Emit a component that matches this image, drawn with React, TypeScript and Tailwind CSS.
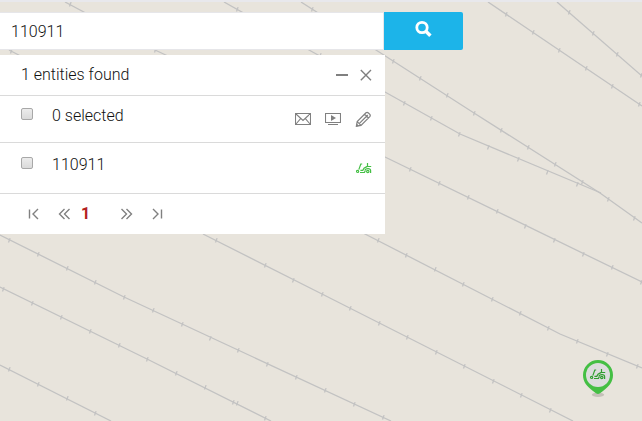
import type { ReactNode } from "react"

interface IconButtonProps {
  label: string
  children: ReactNode
}

type Point = [number, number]

interface Track {
  line: string
  ticks: Point[]
}

const tracks: Track[] = [
  {
    line: "488,2 559,50 642,106",
    ticks: [[506, 14], [533, 32], [559, 50], [586, 68], [612, 86], [639, 104]],
  },
  {
    line: "557,2 642,76",
    ticks: [[569, 12], [593, 33], [617, 54], [641, 75]],
  },
  {
    line: "301,2 376,50 474,113 600,193 642,223",
    ticks: [[312, 9], [393, 61], [420, 78], [447, 95], [474, 113], [501, 130], [528, 147], [555, 164], [582, 182], [608, 199], [634, 218]],
  },
  {
    line: "224,2 309,50 385,92 460,134 601,193",
    ticks: [[237, 9], [320, 55], [404, 103], [431, 118], [459, 134], [488, 147], [518, 159], [547, 172], [577, 184]],
  },
  {
    line: "65,2 155,50 385,157 642,282",
    ticks: [[70, 4], [155, 50], [410, 169], [439, 183], [468, 197], [497, 211], [525, 226], [554, 240], [583, 254], [612, 267], [641, 282]],
  },
  {
    line: "9,50 365,234 560,334 642,368",
    ticks: [[11, 51], [378, 240], [406, 255], [435, 269], [463, 284], [492, 299], [520, 313], [548, 328], [577, 341], [607, 354], [637, 366]],
  },
  {
    line: "203,234 322,294 573,421",
    ticks: [[216, 240], [265, 265], [293, 280], [322, 294], [350, 308], [379, 323], [407, 337], [436, 352], [464, 366], [493, 381], [521, 395], [550, 410]],
  },
  {
    line: "0,235 124,297 238,350 391,421",
    ticks: [[9, 240], [38, 254], [67, 268], [95, 282], [124, 297], [153, 310], [182, 324], [210, 338], [238, 350], [267, 364], [296, 377], [325, 390], [354, 404], [383, 417]],
  },
  {
    line: "0,287 147,359 271,421",
    ticks: [[3, 289], [32, 303], [61, 317], [90, 331], [119, 345], [147, 359], [176, 373], [205, 387], [233, 402], [237, 403], [265, 418]],
  },
  {
    line: "0,365 111,421",
    ticks: [[9, 369], [38, 384], [67, 398], [95, 413]],
  },
]

function MapBackground() {
  return (
    <svg
      className="absolute inset-0 h-full w-full"
      viewBox="0 0 642 421"
      preserveAspectRatio="xMinYMin slice"
      fill="none"
      stroke="#c2c2c2"
      aria-hidden="true"
    >
      {tracks.map((track) => (
        <g key={track.line}>
          <polyline points={track.line} strokeWidth="1.3" />
          {track.ticks.map(([x, y]) => (
            <path key={`${x}-${y}`} d={`M${x - 0.5} ${y + 2.5}l1.6 -4.4`} strokeWidth="1.3" />
          ))}
        </g>
      ))}
    </svg>
  )
}

function MowerShape() {
  return (
    <g fill="none" stroke="currentColor" strokeWidth="1.2">
      <path d="M6.2 1H4.8L2.8 6.6" />
      <circle cx="1.6" cy="8.4" r="1.1" />
      <path d="M4 9.5H8.4L9.4 7.4M4.4 7.3H6.8L8 5.2L11.3 3.4M11.5 0V3.5H15.2" />
      <path d="M8.8 7.2Q9.6 5.7 12 5.7Q14.6 5.7 14.6 7.6V10" />
      <circle cx="11.8" cy="8.5" r="1.2" />
    </g>
  )
}

function MapPin() {
  return (
    <svg className="absolute top-[360px] left-[583px]" width="30" height="38" viewBox="0 0 30 38" role="img" aria-label="110911">
      <ellipse cx="15" cy="34.8" rx="6.2" ry="2.2" fill="#c5c0b9" />
      <path d="M15 0A15 15 0 0 1 30 15C30 22 26 26.5 20 31Q16.5 34 15 34Q13.5 34 10 31C4 26.5 0 22 0 15A15 15 0 0 1 15 0Z" fill="#44bf44" />
      <circle cx="15" cy="15" r="12" fill="#dcdddd" />
      <g transform="translate(7 9)" className="text-[#2f9e2f]">
        <MowerShape />
      </g>
    </svg>
  )
}

function IconButton({ label, children }: IconButtonProps) {
  return (
    <button type="button" aria-label={label} className="flex h-4 w-4 cursor-pointer items-center justify-center text-[#808080]">
      <svg width="16" height="16" viewBox="0 0 16 16" fill="none" stroke="currentColor" strokeWidth="1.4">
        {children}
      </svg>
    </button>
  )
}

function Checkbox({ id }: { id: string }) {
  return (
    <input
      id={id}
      type="checkbox"
      className="mt-3 h-3 w-3 shrink-0 appearance-none rounded-xs border border-[#a8a8a8] bg-linear-to-b from-[#ececec] to-[#dadada] checked:bg-none checked:bg-[#1cb4e9]"
    />
  )
}

function SearchBar() {
  return (
    <form className="flex items-center" onSubmit={(e) => e.preventDefault()}>
      <input
        type="text"
        aria-label="Search entities"
        defaultValue="110911"
        className="h-[38px] w-full max-w-[384px] min-w-0 border border-l-0 border-[#e6e6e9] bg-white pl-[11px] text-base font-light outline-none"
      />
      <button type="submit" aria-label="Search" className="flex h-[38px] w-[79px] shrink-0 cursor-pointer justify-center rounded-r-xs bg-[#1cb4e9] pt-2 text-white">
        <svg width="18" height="18" viewBox="0 0 18 18" fill="none" stroke="currentColor" strokeWidth="2.8">
          <circle cx="7" cy="7.5" r="5.2" />
          <path d="M10.6 11L15.4 15.8" strokeWidth="3.4" />
        </svg>
      </button>
    </form>
  )
}

function Pager() {
  return (
    <nav aria-label="Pages" className="flex h-10 items-center pl-[26px]">
      <IconButton label="First page">
        <path d="M3.5 3.5V12.5M12 3L7 8L12 13" />
      </IconButton>
      <div className="ml-[14px] flex">
        <IconButton label="Previous page">
          <path d="M8.5 3L3.5 8L8.5 13M13.5 3L8.5 8L13.5 13" />
        </IconButton>
      </div>
      <a href="#page-1" aria-current="page" className="ml-[9px] w-[38px] text-base leading-5 font-bold text-[#b32020]">1</a>
      <IconButton label="Next page">
        <path d="M2.5 3L7.5 8L2.5 13M7.5 3L12.5 8L7.5 13" />
      </IconButton>
      <div className="ml-[14px] flex">
        <IconButton label="Last page">
          <path d="M4 3L9 8L4 13M12.5 3.5V12.5" />
        </IconButton>
      </div>
    </nav>
  )
}

function ResultsPanel() {
  return (
    <section className="mt-[5px] w-full max-w-[385px] divide-y divide-[#dadada] bg-white">
      <header className="flex h-[41px] items-center pr-3 pl-[21px]">
        <h1 className="grow text-base font-light">1 entities found</h1>
        <div className="flex gap-2">
          <IconButton label="Minimize">
            <path d="M3 8H15" strokeWidth="2" />
          </IconButton>
          <IconButton label="Close">
            <path d="M3.8 3L14 13.2M14 3L3.8 13.2" strokeWidth="1.4" />
          </IconButton>
        </div>
      </header>
      <div className="flex h-[47px] pr-[14px] pl-[21px]">
        <Checkbox id="select-all" />
        <label htmlFor="select-all" className="grow pt-2 pl-[19px] text-base font-light">0 selected</label>
        <div className="flex gap-[14px] pt-[15px]">
          <IconButton label="Send message">
            <path d="M.5 2.5H15.5V13.5H.5ZM1 3L8 9.5L15 3M1 13L5.6 7.6M15 13L10.4 7.6" strokeWidth="1.1" />
          </IconButton>
          <IconButton label="Show playback">
            <path d="M.5 2.5H15.5V11.5H.5ZM3 13.5H13" strokeWidth="1.1" />
            <path d="M6 4L11 7L6 10Z" fill="currentColor" stroke="none" />
          </IconButton>
          <IconButton label="Edit">
            <path d="M1.4 15.2L2.2 10.6L11 1.8Q12.2 .8 13.4 2L14.6 3.2Q15.8 4.4 14.8 5.6L6 14.4ZM2.2 10.6L6 14.4M4.2 12.6L12.8 4M9.6 3.2L13.4 7" strokeWidth="1.2" />
            <path d="M1.2 15.4L1.7 12.6L4 14.9Z" fill="currentColor" stroke="none" />
          </IconButton>
        </div>
      </div>
      <div className="flex h-[51px] pr-[13px] pl-[21px]">
        <div className="flex grow pt-[2px]">
          <Checkbox id="entity-110911" />
          <label htmlFor="entity-110911" className="pt-2 pl-[19px] text-base font-light">110911</label>
        </div>
        <svg className="mt-5 text-[#44bf44]" width="16" height="11" viewBox="0 0 16 11" role="img" aria-label="Mower">
          <MowerShape />
        </svg>
      </div>
      <Pager />
    </section>
  )
}

export default function App() {
  return (
    <main className="relative min-h-screen overflow-hidden border-t-2 border-[#e8e8ec] bg-[#e8e4dc] font-['Roboto',sans-serif] text-[#111111]">
      <div className="absolute inset-x-0 -top-[2px] h-screen">
        <MapBackground />
        <MapPin />
      </div>
      <div className="relative pt-[10px]">
        <SearchBar />
        <ResultsPanel />
      </div>
    </main>
  )
}
